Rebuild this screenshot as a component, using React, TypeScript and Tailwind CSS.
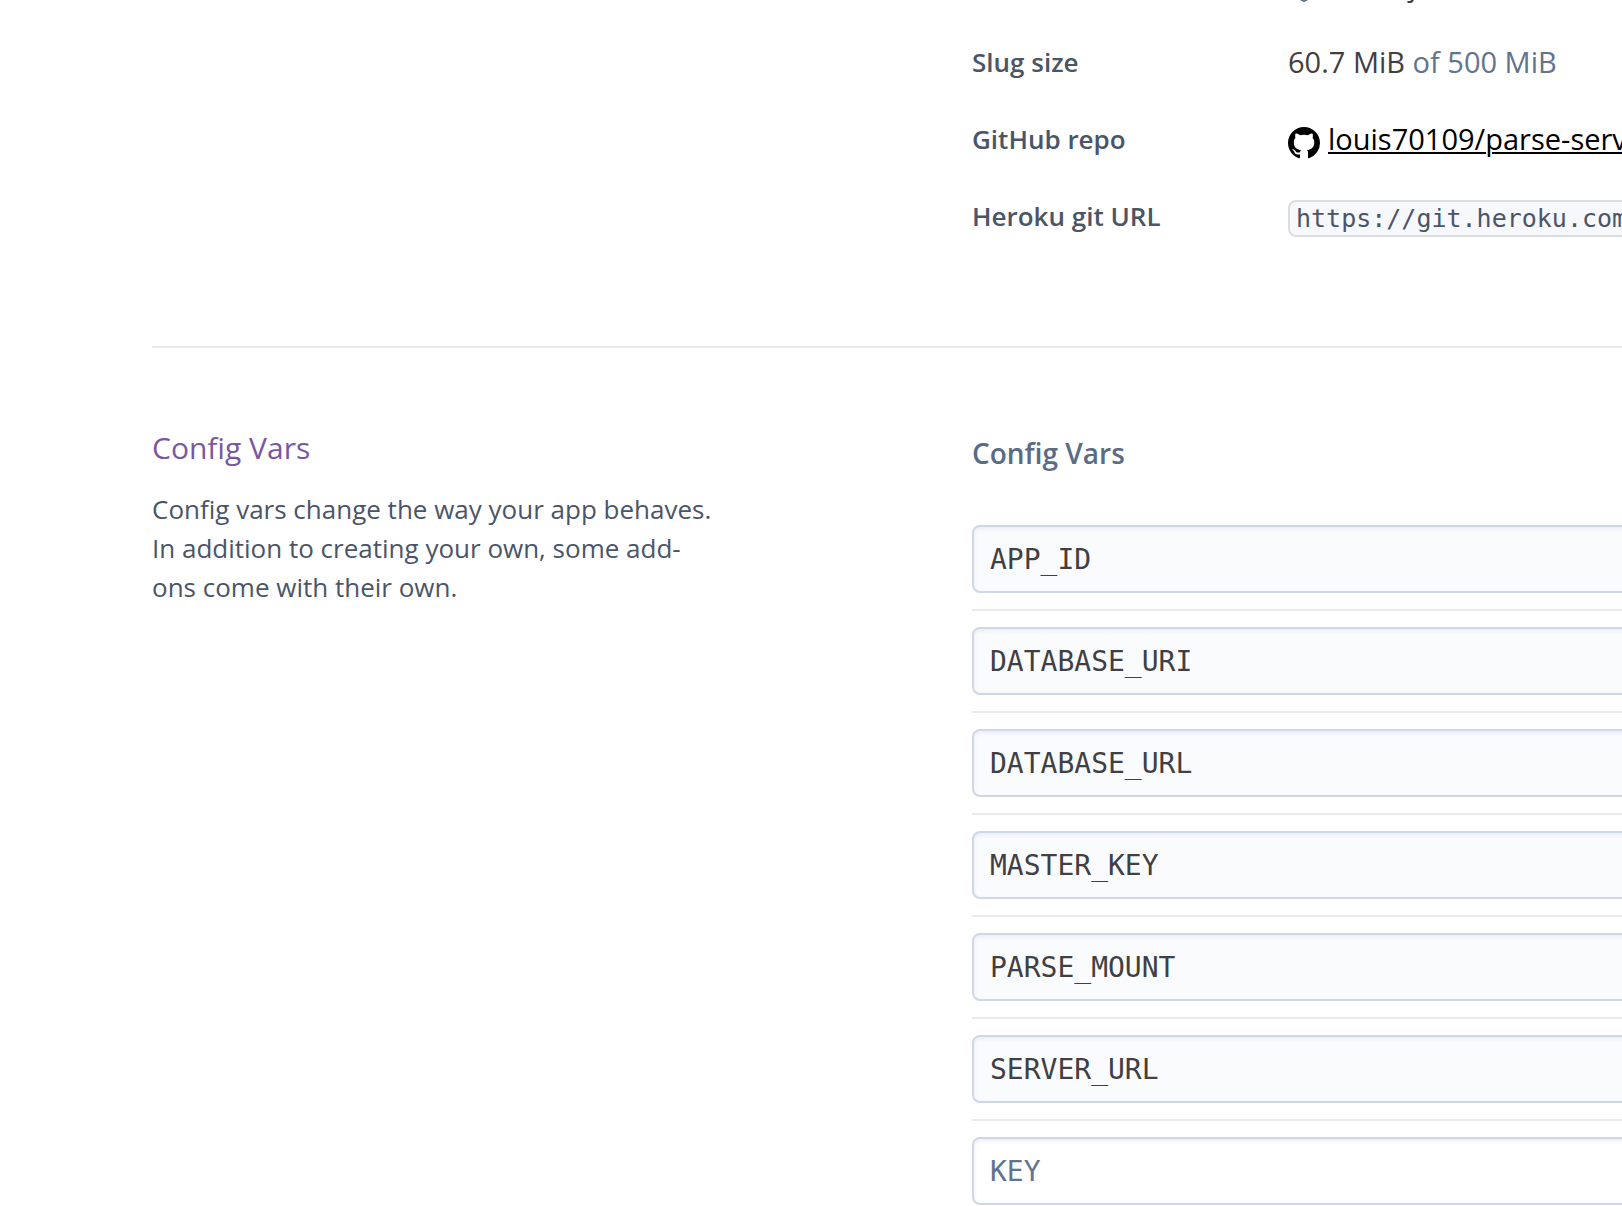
import type { ReactNode } from "react";

const configVars = [
  "APP_ID",
  "DATABASE_URI",
  "DATABASE_URL",
  "MASTER_KEY",
  "PARSE_MOUNT",
  "SERVER_URL",
];

function NodeMark() {
  return (
    <svg viewBox="0 0 32 32" className="mr-2 size-8 shrink-0" fill="currentColor" aria-hidden="true">
      <path d="M14.6 1.4a2.8 2.8 0 0 1 2.8 0l10.2 5.9a2.8 2.8 0 0 1 1.4 2.4v11.6a2.8 2.8 0 0 1-1.4 2.4l-10.2 5.9a2.8 2.8 0 0 1-2.8 0L4.400 23.700a2.800 2.800 0 0 1-1.400-2.400V9.700a2.800 2.800 0 0 1 1.400-2.400z" />
    </svg>
  );
}

function GitHubMark() {
  return (
    <svg viewBox="0 0 16 16" className="mt-0.5 size-8 shrink-0" fill="currentColor" aria-hidden="true">
      <path d="M8 0C3.58 0 0 3.58 0 8c0 3.54 2.29 6.53 5.47 7.59.4.07.55-.17.55-.38 0-.19-.01-.82-.01-1.49-2.01.37-2.53-.49-2.69-.94-.09-.23-.48-.94-.82-1.13-.28-.15-.68-.52-.01-.53.63-.01 1.08.58 1.23.82.72 1.21 1.87.87 2.33.66.07-.52.28-.87.51-1.07-1.78-.2-3.64-.89-3.64-3.95 0-.87.31-1.59.82-2.15-.08-.2-.36-1.02.08-2.12 0 0 .67-.21 2.2.82.64-.18 1.32-.27 2-.27s1.36.09 2 .27c1.53-1.04 2.2-.82 2.2-.82.44 1.1.16 1.92.08 2.12.51.56.82 1.27.82 2.15 0 3.07-1.87 3.75-3.65 3.95.29.25.54.73.54 1.48 0 1.07-.01 1.93-.01 2.2 0 .21.15.46.55.38A8.01 8.01 0 0 0 16 8c0-4.42-3.58-8-8-8z" />
    </svg>
  );
}

function InfoRow({ label, children }: { label: string; children: ReactNode }) {
  return (
    <div className="flex h-[77px] items-center whitespace-nowrap">
      <dt className="w-[316px] shrink-0 pb-1.5 text-[26px] leading-10 font-semibold text-[#4a5568]">{label}</dt>
      <dd className="flex items-center text-[29px] leading-10 text-[#3f3f44]">{children}</dd>
    </div>
  );
}

const inputClass =
  "block h-[68px] w-full rounded-lg border-2 border-[#cfd7e6] px-4 font-['DejaVu_Sans_Mono',monospace] text-[28px] text-[#3f3f44] shadow-[inset_0_2px_4px_#e8edf5] outline-none placeholder:text-[#62738d] placeholder:opacity-100";

export default function App() {
  return (
    <main className="overflow-hidden bg-white pl-[152px] font-['Open_Sans',sans-serif]">
      <section className="grid grid-cols-[82fr_65fr] border-b-2 border-[#e7ebf0] pb-[89px]">
        <dl className="col-start-2 -mt-[51px] min-w-0">
          <InfoRow label="Framework">
            <span className="text-[#62738d]">
              <NodeMark />
            </span>
            <span className="pb-1.5">Node.js</span>
          </InfoRow>
          <InfoRow label="Slug size">
            <span className="pb-1.5">
              60.7 MiB <span className="text-[#62738d]">of 500 MiB</span>
            </span>
          </InfoRow>
          <InfoRow label="GitHub repo">
            <a href="#repo" className="flex items-center gap-2 text-black">
              <GitHubMark />
              <span className="pb-1.5 underline decoration-2 underline-offset-2">louis70109/parse-server</span>
            </a>
          </InfoRow>
          <InfoRow label="Heroku git URL">
            <code className="rounded-lg border-2 border-[#dddce0] bg-[#f7f8fc] px-1.5 font-['DejaVu_Sans_Mono',monospace] text-[25px] leading-[33px] text-[#4a5568]">
              https://git.heroku.com/
            </code>
          </InfoRow>
        </dl>
      </section>

      <section className="grid grid-cols-[82fr_65fr] pt-[78px]">
        <div className="max-w-[560px]">
          <h2 className="text-[30px] leading-[44px] text-[#79589f]">Config Vars</h2>
          <p className="mt-5 text-[26px] leading-[39px] text-[#4a5568]">
            Config vars change the way your app behaves. In addition to creating your own, some add-ons come with their
            own.
          </p>
        </div>

        <div className="-mr-4 min-w-0">
          <h3 className="mt-[5px] text-[28px] leading-[44px] font-semibold text-[#5b6b86]">Config Vars</h3>
          <ul className="mt-[50px]">
            {configVars.map((name) => (
              <li key={name} className="mb-4 border-b-2 border-[#e7ebf0] pb-4">
                <input
                  className={`${inputClass} bg-[#fafbfd]`}
                  aria-label={`Config var ${name}`}
                  defaultValue={name}
                  readOnly
                />
              </li>
            ))}
            <li>
              <input className={`${inputClass} bg-white`} aria-label="New config var key" placeholder="KEY" />
            </li>
          </ul>
        </div>
      </section>
    </main>
  );
}
